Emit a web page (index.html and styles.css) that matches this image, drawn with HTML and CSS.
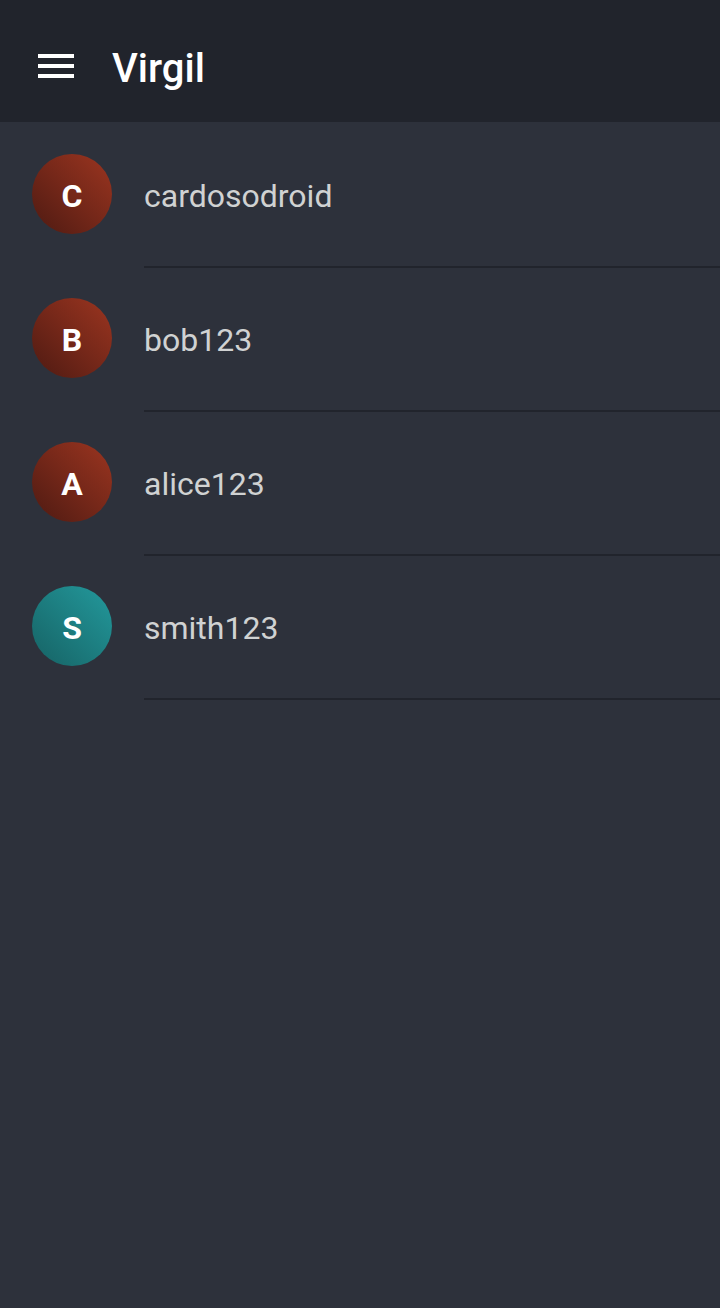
FILE: index.html
```html
<!DOCTYPE html>
<html lang="en">
<head>
<meta charset="utf-8">
<meta name="viewport" content="width=device-width, initial-scale=1">
<title>Virgil</title>
<link rel="stylesheet" href="styles.css">
</head>
<body>
<header class="toolbar">
  <button class="menu-button" type="button" aria-label="Open menu">
    <svg class="menu-icon" viewBox="0 0 36 24" aria-hidden="true"><path d="M0 0h36v4H0zM0 10h36v4H0zM0 20h36v4H0z"/></svg>
  </button>
  <h1 class="title">Virgil</h1>
</header>
<main>
  <ul class="contacts">
    <li class="contact"><span class="avatar avatar-red" aria-hidden="true">C</span><a class="name" href="#cardosodroid">cardosodroid</a></li>
    <li class="contact"><span class="avatar avatar-red" aria-hidden="true">B</span><a class="name" href="#bob123">bob123</a></li>
    <li class="contact"><span class="avatar avatar-red" aria-hidden="true">A</span><a class="name" href="#alice123">alice123</a></li>
    <li class="contact"><span class="avatar avatar-teal" aria-hidden="true">S</span><a class="name" href="#smith123">smith123</a></li>
  </ul>
</main>
</body>
</html>
```
FILE: styles.css
```css
* {
  box-sizing: border-box;
}

body {
  margin: 0;
  min-height: 100vh;
  background: #2d313b;
  color: #d0d2d2;
  font-family: Roboto, "Liberation Sans", sans-serif;
}

.toolbar {
  display: flex;
  align-items: center;
  height: 122px;
  padding: 12px 32px 0;
  background: #21242c;
}

.menu-button {
  display: flex;
  align-items: center;
  width: 80px;
  height: 80px;
  padding: 0 6px 2px;
  border: 0;
  background: none;
  cursor: pointer;
}

.menu-icon {
  width: 36px;
  height: 24px;
  fill: #fff;
}

.title {
  margin: 0;
  padding-top: 4px;
  color: #fff;
  font-size: 40px;
  font-weight: 500;
  line-height: 48px;
}

.contacts {
  margin: 0;
  padding: 2px 0 0;
  list-style: none;
}

.contact {
  display: flex;
  align-items: center;
  gap: 32px;
  height: 144px;
  padding-left: 32px;
}

.avatar {
  display: flex;
  align-items: center;
  justify-content: center;
  flex: none;
  width: 80px;
  height: 80px;
  margin-bottom: 4px;
  padding-top: 4px;
  border-radius: 50%;
  color: #fff;
  font-size: 32px;
  font-weight: 700;
}

.avatar-red {
  background: linear-gradient(45deg, #4e1a12, #9c3520);
}

.avatar-teal {
  background: linear-gradient(45deg, #166264, #23999c);
}

.name {
  display: flex;
  align-items: center;
  flex: 1;
  height: 100%;
  padding-top: 2px;
  border-bottom: 2px solid #21242c;
  color: inherit;
  font-size: 32px;
  text-decoration: none;
}
```
